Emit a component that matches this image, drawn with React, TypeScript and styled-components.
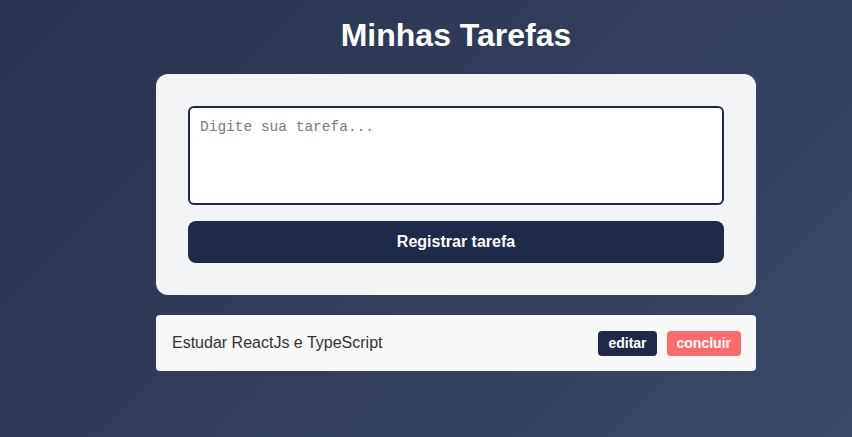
import React, { useState } from "react";
import styled, { createGlobalStyle } from "styled-components";

const GlobalStyle = createGlobalStyle`
  html, body { margin: 0; padding: 0; }
  body {
    min-height: 100vh;
    background: linear-gradient(135deg, #29334f 0%, #313d5a 50%, #3c4a67 100%);
    font-family: "Liberation Sans", Arial, sans-serif;
  }
  * { box-sizing: border-box; }
`;

const Page = styled.div`
  min-height: 437px;
  display: flex;
  flex-direction: column;
  align-items: center;
  padding: 17px 0 0 60px;
`;

const Container = styled.main`
  width: 600px;
  display: flex;
  flex-direction: column;
  gap: 20px;
`;

const Title = styled.h1`
  margin: 0;
  text-align: center;
  color: #ffffff;
  font-size: 32px;
  font-weight: 700;
  line-height: 37px;
`;

const Card = styled.form`
  background: #f3f4f6;
  border-radius: 12px;
  padding: 32px;
  display: flex;
  flex-direction: column;
  gap: 16px;
`;

const TextArea = styled.textarea`
  width: 100%;
  height: 99px;
  resize: none;
  border: 2px solid #1f2a48;
  border-radius: 6px;
  background: #ffffff;
  padding: 11px 10px;
  font-family: "Liberation Mono", "DejaVu Sans Mono", monospace;
  font-size: 14.5px;
  color: #222;
  outline: none;
  &::placeholder { color: #7a7a7a; }
`;

const PrimaryButton = styled.button`
  height: 42px;
  border: none;
  border-radius: 8px;
  background: #1f2a48;
  color: #ffffff;
  font-family: "Liberation Sans", Arial, sans-serif;
  font-size: 16px;
  font-weight: 700;
  cursor: pointer;
`;

const TaskItem = styled.div`
  height: 56px;
  background: #f8f8f8;
  border-radius: 4px;
  padding: 0 15px 0 16px;
  display: flex;
  align-items: center;
  justify-content: space-between;
`;

const TaskText = styled.span`
  color: #333333;
  font-size: 16px;
`;

const Actions = styled.div`
  display: flex;
  gap: 10px;
`;

const SmallButton = styled.button<{ $variant: "edit" | "done" }>`
  height: 25px;
  padding: 0 10px;
  border: none;
  border-radius: 4px;
  background: ${(p) => (p.$variant === "edit" ? "#1f2a48" : "#ff6b6b")};
  color: #ffffff;
  font-family: "Liberation Sans", Arial, sans-serif;
  font-size: 14px;
  font-weight: 700;
  cursor: pointer;
`;

export default function App() {
  const [text, setText] = useState("");
  const tasks = ["Estudar ReactJs e TypeScript"];
  return (
    <>
      <GlobalStyle />
      <Page>
        <Container>
          <Title>Minhas Tarefas</Title>
          <Card onSubmit={(e) => e.preventDefault()}>
            <TextArea
              placeholder="Digite sua tarefa..."
              value={text}
              onChange={(e) => setText(e.target.value)}
            />
            <PrimaryButton type="submit">Registrar tarefa</PrimaryButton>
          </Card>
          {tasks.map((t) => (
            <TaskItem key={t}>
              <TaskText>{t}</TaskText>
              <Actions>
                <SmallButton $variant="edit">editar</SmallButton>
                <SmallButton $variant="done">concluir</SmallButton>
              </Actions>
            </TaskItem>
          ))}
        </Container>
      </Page>
    </>
  );
}
